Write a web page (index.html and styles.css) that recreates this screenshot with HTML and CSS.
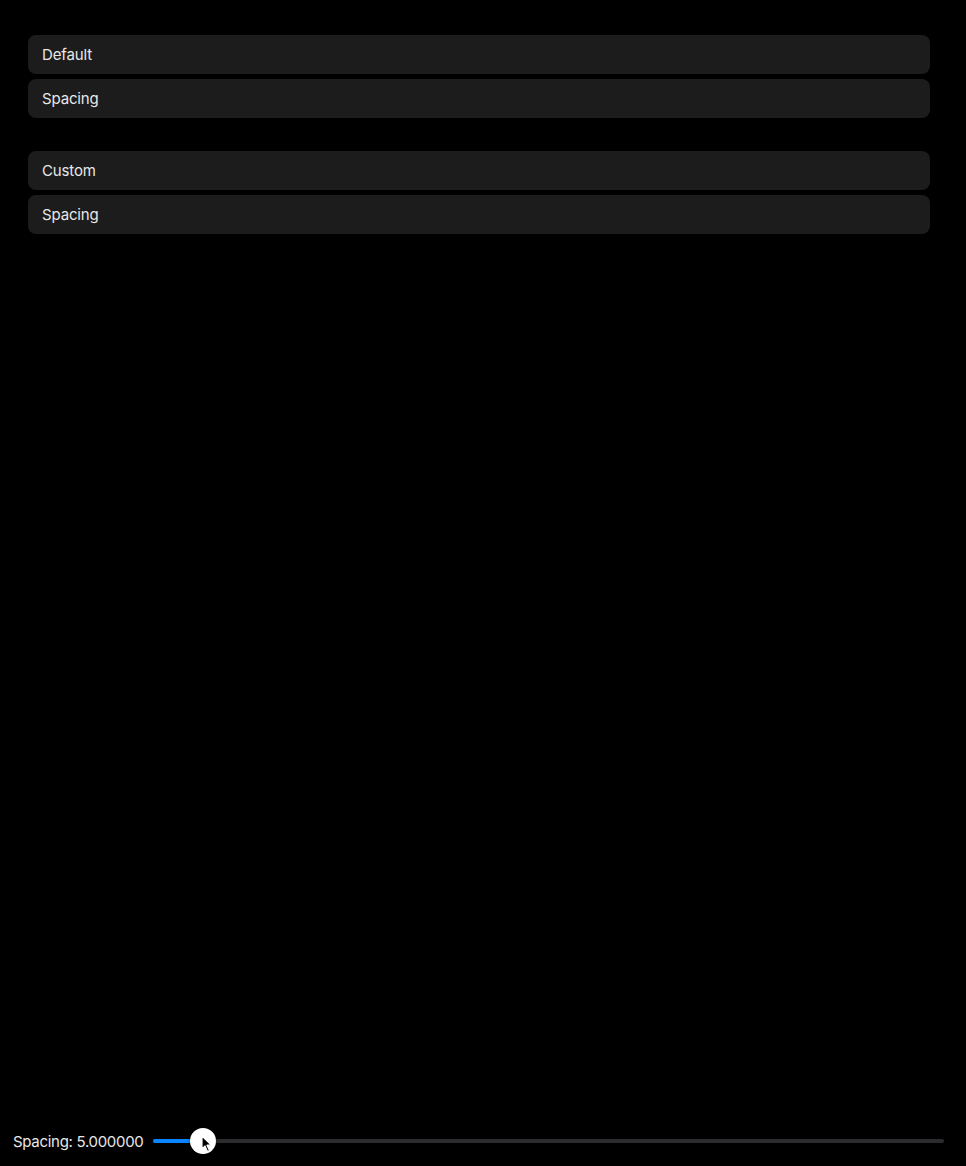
FILE: index.html
```html
<!DOCTYPE html>
<html lang="en">
<head>
    <meta charset="UTF-8">
    <meta name="viewport" content="width=device-width, initial-scale=1.0">
    <title>Spacing</title>
    <link rel="stylesheet" href="styles.css">
</head>
<body>
    <div class="page">
        <div class="stacks">
            <div class="stack">
                <div class="row">Default</div>
                <div class="row">Spacing</div>
            </div>
            <div class="stack">
                <div class="row">Custom</div>
                <div class="row">Spacing</div>
            </div>
        </div>

        <div class="slider-bar">
            <span class="slider-label">Spacing: 5.000000</span>
            <div class="slider">
                <div class="track"></div>
                <div class="fill"></div>
                <div class="thumb"></div>
                <svg class="cursor" width="12" height="18" viewBox="0 0 12 18">
                    <path d="M1 1 L1 14 L4 11 L6.5 16.5 L8.5 15.6 L6 10.2 L10.5 10.2 Z" fill="#000" stroke="#fff" stroke-width="1.2" stroke-linejoin="round"/>
                </svg>
            </div>
        </div>
    </div>
</body>
</html>
```

FILE: styles.css
```css
* {
    margin: 0;
    padding: 0;
    box-sizing: border-box;
}

body {
    background: #000000;
    color: #e8e8e8;
    font-family: Inter, 'Noto Sans', sans-serif;
    font-size: 15px;
}

.page {
    height: 1166px;
    display: flex;
    flex-direction: column;
}

.stacks {
    padding: 35px 36px 0 28px;
    display: flex;
    flex-direction: column;
    gap: 33px;
    flex: 1;
}

.stack {
    display: flex;
    flex-direction: column;
    gap: 5px;
}

.row {
    background: #1c1c1d;
    border-radius: 8px;
    height: 39px;
    padding: 0 14px;
    display: flex;
    align-items: center;
    letter-spacing: -0.15px;
}

.slider-bar {
    display: flex;
    align-items: center;
    padding: 0 22px 0 13px;
    height: 50px;
}

.slider-label {
    width: 140px;
    letter-spacing: -0.3px;
    white-space: nowrap;
}

.slider {
    position: relative;
    flex: 1;
    height: 28px;
}

.track {
    position: absolute;
    left: 0;
    right: 0;
    top: 12px;
    height: 4px;
    border-radius: 2px;
    background: #2c2c2e;
}

.fill {
    position: absolute;
    left: 0;
    top: 12px;
    width: 50px;
    height: 4px;
    border-radius: 2px;
    background: #0a84ff;
}

.thumb {
    position: absolute;
    left: 37px;
    top: 1px;
    width: 26px;
    height: 26px;
    border-radius: 50%;
    background: #ffffff;
    box-shadow: 0 1px 4px rgba(0, 0, 0, 0.4);
}

.cursor {
    position: absolute;
    left: 48px;
    top: 8px;
}
```
